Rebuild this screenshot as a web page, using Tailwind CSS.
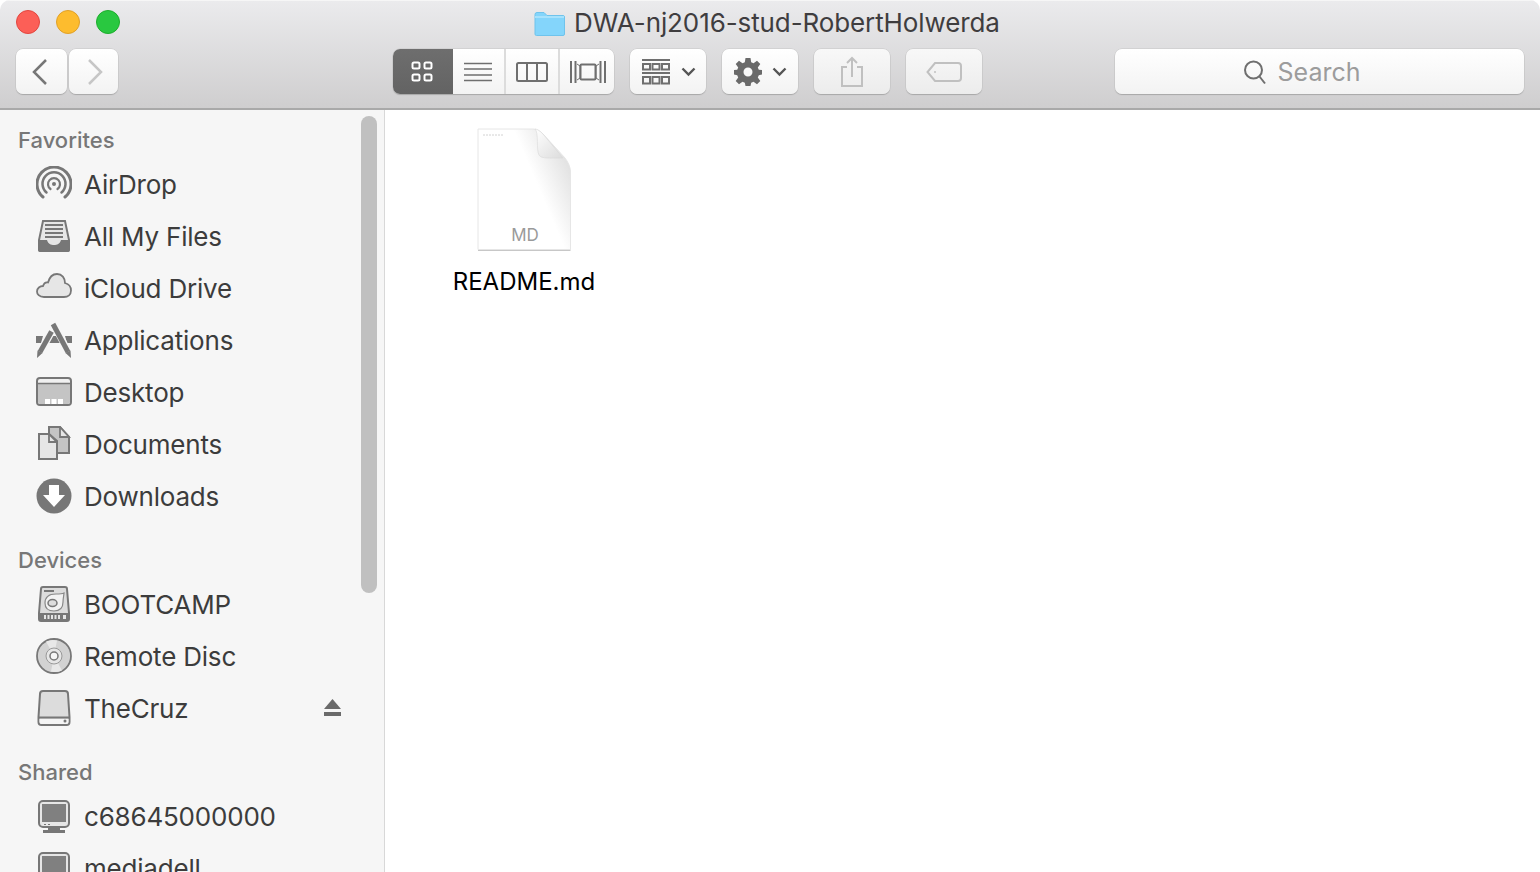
<!DOCTYPE html>
<html lang="en">
<head>
  <meta charset="UTF-8" />
  <title>DWA-nj2016-stud-RobertHolwerda</title>
  <script src="https://cdn.jsdelivr.net/npm/@tailwindcss/browser@4"></script>
</head>
<body class="bg-white h-[872px] overflow-hidden font-['Inter','Liberation_Sans',sans-serif] text-[#3c3c3c]">
<div class="flex flex-col h-[872px] overflow-hidden rounded-t-[10px]">

  <!-- toolbar -->
  <header class="h-[110px] shrink-0 flex flex-col bg-gradient-to-b from-[#ebebed] to-[#cfcecf] border-b-2 border-[#a9a9a9] shadow-[inset_0_1px_0_#f6f6f6]">
    <div class="relative h-[49px] flex items-center justify-center pr-[6px] pb-[3px]">
      <div class="absolute left-[16px] top-[10px] flex gap-[16px]">
        <span class="w-[24px] h-[24px] rounded-full bg-[#fc5f57] border border-[#e2463f]"></span>
        <span class="w-[24px] h-[24px] rounded-full bg-[#fdbc2e] border border-[#e0a028]"></span>
        <span class="w-[24px] h-[24px] rounded-full bg-[#29c840] border border-[#1dad2c]"></span>
      </div>
      <svg class="mr-[9px]" width="31" height="25" viewBox="0 0 31 25">
        <path d="M1 3.500A2 2 0 0 1 3 1.500H10L13 4.500H29A1.500 1.500 0 0 1 30.500 6V23A1.500 1.500 0 0 1 29 24.500H2.500A1.500 1.500 0 0 1 1 23Z" fill="#84d5fb" stroke="#6fc3ec" stroke-width="1"/>
        <path d="M1 6H30" stroke="#a7e2fc" stroke-width="2"/>
      </svg>
      <span class="text-[26px] tracking-[-0.1px] leading-none text-[#3f3d3f]">DWA-nj2016-stud-RobertHolwerda</span>
    </div>

    <div class="flex items-start pl-[16px]">
      <div class="flex gap-[2px]">
        <button class="w-[51px] h-[45px] flex items-center justify-center pr-[4px] rounded-[7px] bg-gradient-to-b from-white to-[#f3f3f3] shadow-[0_1px_1px_#a8a8a8,0_0_0_0.5px_#c6c6c6]">
          <svg width="18" height="28" viewBox="0 0 18 28" fill="none"><path d="M15 2L3 14L15 26" stroke="#777" stroke-width="2.500"/></svg>
        </button>
        <button class="w-[49px] h-[45px] flex items-center justify-center pl-[3px] rounded-[7px] bg-gradient-to-b from-white to-[#f3f3f3] shadow-[0_1px_1px_#a8a8a8,0_0_0_0.5px_#c6c6c6]">
          <svg width="18" height="28" viewBox="0 0 18 28" fill="none"><path d="M3 2L15 14L3 26" stroke="#c6c6c6" stroke-width="2.500"/></svg>
        </button>
      </div>

      <div class="ml-[275px] flex h-[45px] rounded-[7px] overflow-hidden bg-gradient-to-b from-white to-[#f3f3f3] shadow-[0_1px_1px_#a8a8a8,0_0_0_0.5px_#c6c6c6]">
        <div class="w-[60px] flex items-center justify-center pr-[2px] bg-gradient-to-b from-[#6e6e6e] to-[#636363]">
          <svg width="22" height="22" viewBox="0 0 22 22" fill="none" stroke="#fff" stroke-width="2"><rect x="1.500" y="1.500" width="7" height="6" rx="1.500"/><rect x="13.500" y="1.500" width="7" height="6" rx="1.500"/><rect x="1.500" y="13.500" width="7" height="6" rx="1.500"/><rect x="13.500" y="13.500" width="7" height="6" rx="1.500"/></svg>
        </div>
        <div class="w-[53px] flex items-center justify-center pr-[2px] border-r-2 border-[#dcdcdc]">
          <svg width="28" height="20" viewBox="0 0 28 20" stroke="#6f6f6f" stroke-width="1.500"><path d="M0 1.500H28M0 7H28M0 13H28M0 18.500H28"/></svg>
        </div>
        <div class="w-[54px] flex items-center justify-center border-r-2 border-[#dcdcdc]">
          <svg width="32" height="20" viewBox="0 0 32 20" fill="none" stroke="#6f6f6f" stroke-width="2"><rect x="1" y="1" width="30" height="18" rx="1.500"/><path d="M11 1V19M21 1V19"/></svg>
        </div>
        <div class="w-[54px] flex items-center justify-center pl-[2px]">
          <svg width="36" height="22" viewBox="0 0 36 22" fill="none" stroke="#6f6f6f" stroke-width="2"><path d="M1 0V22M5.500 0V22M30.500 0V22M35 0V22"/><rect x="10.500" y="3.500" width="15" height="15" rx="1"/><path d="M7 3L10 5V17L7 19M29 3L26 5V17L29 19" stroke-width="1"/></svg>
        </div>
      </div>

      <button class="ml-[16px] w-[76px] h-[45px] flex items-center justify-center gap-[11px] pl-[1px] rounded-[7px] bg-gradient-to-b from-white to-[#f3f3f3] shadow-[0_1px_1px_#a8a8a8,0_0_0_0.5px_#c6c6c6]">
        <svg width="28" height="26" viewBox="0 0 28 26" fill="none" stroke="#6f6f6f" stroke-width="2"><path d="M0 1H28M0 14H28" /><rect x="1" y="5" width="7" height="5.500"/><rect x="10.500" y="5" width="7" height="5.500"/><rect x="20" y="5" width="7" height="5.500"/><rect x="1" y="18" width="7" height="6.500"/><rect x="10.500" y="18" width="7" height="6.500"/><rect x="20" y="18" width="7" height="6.500"/></svg>
        <svg width="15" height="10" viewBox="0 0 15 10" fill="none"><path d="M1.500 1.500L7.500 7.500L13.500 1.500" stroke="#555" stroke-width="2.400"/></svg>
      </button>

      <button class="ml-[16px] w-[76px] h-[45px] flex items-center justify-center gap-[10px] pl-[1px] rounded-[7px] bg-gradient-to-b from-white to-[#f3f3f3] shadow-[0_1px_1px_#a8a8a8,0_0_0_0.5px_#c6c6c6]">
        <svg width="28" height="28" viewBox="0 0 28 28"><path fill="#6a6a6a" fill-rule="evenodd" d="M11.500 0H16.500L17.200 4.200L19.500 5.200L23 2.700L26.300 6L23.800 9.500L24.800 11.800L28 12V16.500L24.800 17.200L23.800 19.500L26.300 23L23 26.300L19.500 23.800L17.200 24.800L16.500 28H11.500L10.800 24.800L8.500 23.800L5 26.300L1.700 23L4.200 19.500L3.200 17.200L0 16.500V12L3.200 11.800L4.200 9.500L1.700 6L5 2.700L8.500 5.200L10.800 4.200ZM14 9.500A4.500 4.500 0 1 0 14 18.500A4.500 4.500 0 1 0 14 9.500Z"/></svg>
        <svg width="15" height="10" viewBox="0 0 15 10" fill="none"><path d="M1.500 1.500L7.500 7.500L13.500 1.500" stroke="#555" stroke-width="2.400"/></svg>
      </button>

      <button class="ml-[16px] w-[76px] h-[45px] flex items-center justify-center rounded-[7px] bg-gradient-to-b from-[#f8f8f8] to-[#ececec] shadow-[0_1px_1px_#a8a8a8,0_0_0_0.5px_#c6c6c6]">
        <svg width="24" height="32" viewBox="0 0 24 32" fill="none" stroke="#c0c0c0" stroke-width="2"><path d="M7 11H2V30H22V11H17"/><path d="M12 21V2M7 7L12 2L17 7"/></svg>
      </button>

      <button class="ml-[16px] w-[76px] h-[45px] flex items-center justify-center rounded-[7px] bg-gradient-to-b from-[#f8f8f8] to-[#ececec] shadow-[0_1px_1px_#a8a8a8,0_0_0_0.5px_#c6c6c6]">
        <svg width="36" height="22" viewBox="0 0 36 22" fill="none" stroke="#c0c0c0" stroke-width="2"><path d="M9 2H32A3 3 0 0 1 35 5V17A3 3 0 0 1 32 20H9L1.500 11Z"/><circle cx="9" cy="11" r="1" fill="#c0c0c0" stroke="none"/></svg>
      </button>

      <div class="ml-[133px] w-[409px] h-[45px] flex items-center justify-center gap-[11px] pr-[36px] rounded-[7px] bg-gradient-to-b from-white to-[#f3f3f3] shadow-[0_1px_1px_#a8a8a8,0_0_0_0.5px_#c6c6c6]">
        <svg width="24" height="26" viewBox="0 0 24 26" fill="none" stroke="#6f6f6f" stroke-width="2"><circle cx="10.500" cy="11" r="8.500"/><path d="M16.500 17.500L22 24.500"/></svg>
        <span class="text-[25px] leading-none text-[#9c9c9c] pt-[2px]">Search</span>
      </div>
    </div>
  </header>

  <div class="flex flex-1 min-h-0">
    <!-- sidebar -->
    <aside class="relative w-[385px] shrink-0 bg-[#f6f6f6] border-r border-[#d8d8d8] overflow-hidden pl-[18px] pt-[17px]">
      <div class="absolute left-[361px] top-[6px] w-[16px] h-[477px] rounded-full bg-[#c0c0c0]"></div>

      <h3 class="h-[26px] flex items-center text-[22px] font-medium text-[#777]">Favorites</h3>
      <ul class="mt-[5px]">
        <li class="h-[52px] flex items-center text-[26px] tracking-[-0.2px]">
          <svg class="ml-[18px] mr-[12px]" width="36" height="36" viewBox="0 0 36 36" fill="none" stroke="#777"><path d="M7 31A17 17 0 1 1 29 31" stroke-width="3" stroke-linecap="round"/><path d="M10.500 26.500A11.500 11.500 0 1 1 25.500 26.500" stroke-width="2.500" stroke-linecap="round"/><path d="M14.500 23A6 6 0 1 1 21.500 23" stroke-width="2.200" stroke-linecap="round"/><circle cx="18" cy="18" r="2" fill="#777" stroke="none"/></svg>
          <span>AirDrop</span>
        </li>
        <li class="h-[52px] flex items-center text-[26px] tracking-[-0.2px]">
          <svg class="ml-[18px] mr-[12px]" width="36" height="36" viewBox="0 0 36 36"><path d="M7 3H29L33 22V31A2 2 0 0 1 31 33H5A2 2 0 0 1 3 31V22Z" fill="#e6e6e6" stroke="#777" stroke-width="2"/><path d="M9 7H27M9 11H27M9 15H27M9 19H27" stroke="#777" stroke-width="1.800"/><path d="M2 22H11C12 26 15 27 18 27S24 26 25 22H34V32A2 2 0 0 1 32 34H4A2 2 0 0 1 2 32Z" fill="#777"/></svg>
          <span>All My Files</span>
        </li>
        <li class="h-[52px] flex items-center text-[26px] tracking-[-0.2px]">
          <svg class="ml-[18px] mr-[12px]" width="36" height="36" viewBox="0 3 36 36"><path d="M8 30C3 30 1 27 1 24.500C1 21 4 19 7 19C8 16 10 15 12 15.500C13.500 10 17 7 21 7C26 7 29 11 29 16C33 17 35 20 35 23.500C35 27.500 32 30 28 30Z" fill="#e6e6e6" stroke="#777" stroke-width="1.800"/></svg>
          <span>iCloud Drive</span>
        </li>
        <li class="h-[52px] flex items-center text-[26px] tracking-[-0.2px]">
          <svg class="ml-[18px] mr-[12px]" width="36" height="36" viewBox="0 0 36 36">
            <path d="M0 14H7L5 21H0ZM29 14H36V21H31ZM10 14H26L28 21H8Z" fill="#777"/>
            <path d="M17 1L33 31" stroke="#f6f6f6" stroke-width="7"/>
            <path d="M16 9L4 31" stroke="#f6f6f6" stroke-width="7"/>
            <path d="M17 2L32 30" stroke="#777" stroke-width="5"/>
            <path d="M15.500 9.500L4 30" stroke="#777" stroke-width="5"/>
            <path d="M29.500 31L34.500 28.500L35 36ZM1.500 28.500L6.500 31L1 36Z" fill="#777"/>
          </svg>
          <span>Applications</span>
        </li>
        <li class="h-[52px] flex items-center text-[26px] tracking-[-0.2px]">
          <svg class="ml-[18px] mr-[12px]" width="36" height="30" viewBox="0 0 36 30"><rect x="1" y="1" width="34" height="27" rx="3" fill="#f0f0f0" stroke="#777" stroke-width="2"/><path d="M2 7H34V25A2 2 0 0 1 32 27H4A2 2 0 0 1 2 25Z" fill="#c4c4c4"/><path d="M2 6.500H34" stroke="#777" stroke-width="1.500"/><path d="M9 22H14V27H9ZM15.500 22H20.500V27H15.500ZM22 22H27V27H22Z" fill="#fff"/></svg>
          <span>Desktop</span>
        </li>
        <li class="h-[52px] flex items-center text-[26px] tracking-[-0.2px]">
          <svg class="ml-[18px] mr-[12px]" width="36" height="36" viewBox="0 0 36 36"><path d="M13 1H24L33 11V27H21V15L13 8Z" fill="#c4c4c4" stroke="#777" stroke-width="2"/><path d="M24 1V11H33Z" fill="#e6e6e6" stroke="#777" stroke-width="1.800"/><path d="M3 8H13L21 16V33H3Z" fill="#e6e6e6" stroke="#777" stroke-width="2"/><path d="M13 8V16H21" fill="none" stroke="#777" stroke-width="1.800"/></svg>
          <span>Documents</span>
        </li>
        <li class="h-[52px] flex items-center text-[26px] tracking-[-0.2px]">
          <svg class="ml-[18px] mr-[12px]" width="36" height="36" viewBox="0 0 36 36"><circle cx="18" cy="18" r="17.500" fill="#777"/><path d="M13 7H23V17H29L18 29L7 17H13Z" fill="#fff"/></svg>
          <span>Downloads</span>
        </li>
      </ul>

      <h3 class="mt-[25px] h-[26px] flex items-center text-[22px] font-medium text-[#777]">Devices</h3>
      <ul class="mt-[5px]">
        <li class="h-[52px] flex items-center text-[26px] tracking-[-0.2px]">
          <svg class="ml-[18px] mr-[12px]" width="36" height="36" viewBox="0 0 36 36"><path d="M7 1H29A2 2 0 0 1 31 3L33 27V33A2 2 0 0 1 31 35H5A2 2 0 0 1 3 33V27L5 3A2 2 0 0 1 7 1Z" fill="#dcdcdc" stroke="#777" stroke-width="2"/><path d="M8 4H18V6H8Z" fill="#777"/><path d="M28 7C28 7 26 8 20 8C12 8 9 12 9 17C9 22 12 25 18 25C24 25 27 22 27 16C27 12 28 9 28 7Z" fill="#f2f2f2" stroke="#888" stroke-width="1.200"/><ellipse cx="16.500" cy="17" rx="4.500" ry="3.500" fill="#ddd" stroke="#777" stroke-width="1.500"/><path d="M3 27H33V33A2 2 0 0 1 31 35H5A2 2 0 0 1 3 33Z" fill="#777"/><path d="M8 29H10V33H8ZM11.500 29H13.500V33H11.500ZM15 29H17V33H15ZM18.500 29H20.500V33H18.500ZM22 29H24V33H22ZM27 29H30V33H27Z" fill="#e6e6e6"/></svg>
          <span>BOOTCAMP</span>
        </li>
        <li class="h-[52px] flex items-center text-[26px] tracking-[-0.2px]">
          <svg class="ml-[18px] mr-[12px]" width="36" height="36" viewBox="0 0 36 36"><circle cx="18" cy="18" r="17" fill="#d2d2d2" stroke="#777" stroke-width="1.800"/><path d="M18 18L10 3.500A16 16 0 0 1 21 2.500ZM18 18L26 32.500A16 16 0 0 1 15 33.500Z" fill="#e8e8e8"/><circle cx="18" cy="18" r="8" fill="#e6e6e6" stroke="#999" stroke-width="1"/><circle cx="18" cy="18" r="4" fill="#f6f6f6" stroke="#777" stroke-width="1.500"/></svg>
          <span>Remote Disc</span>
        </li>
        <li class="relative h-[52px] flex items-center text-[26px] tracking-[-0.2px]">
          <svg class="ml-[18px] mr-[12px]" width="36" height="36" viewBox="0 0 36 36"><path d="M7 1H29A3 3 0 0 1 32 4L33.500 27V32A3 3 0 0 1 30.500 35H5.500A3 3 0 0 1 2.500 32V27L4 4A3 3 0 0 1 7 1Z" fill="#dcdcdc" stroke="#777" stroke-width="2"/><path d="M2.500 27.500H33.500" stroke="#777" stroke-width="2"/><path d="M3.500 29H32.500V32A2 2 0 0 1 30.500 34H5.500A2 2 0 0 1 3.500 32Z" fill="#f4f4f4"/><circle cx="29" cy="31" r="1.500" fill="#777"/></svg>
          <span>TheCruz</span>
          <svg class="absolute left-[306px] top-[17px]" width="17" height="18" viewBox="0 0 17 18" fill="#6a6a6a"><path d="M8.500 0L17 10H0Z"/><rect y="13" width="17" height="4"/></svg>
        </li>
      </ul>

      <h3 class="mt-[25px] h-[26px] flex items-center text-[22px] font-medium text-[#777]">Shared</h3>
      <ul class="mt-[5px]">
        <li class="h-[52px] flex items-center text-[26px] tracking-[-0.2px]">
          <svg class="ml-[18px] mr-[12px]" width="36" height="36" viewBox="0 0 36 36"><rect x="3" y="3" width="30" height="26" rx="4" fill="#e6e6e6" stroke="#777" stroke-width="2"/><rect x="6" y="6" width="24" height="18" fill="#808080"/><path d="M8 26H10V27H8ZM12 26H14V27H12Z" fill="#777"/><path d="M12 30H24V32H29V35H7V32H12Z" fill="#777"/></svg>
          <span>c68645000000</span>
        </li>
        <li class="h-[52px] flex items-center text-[26px] tracking-[-0.2px]">
          <svg class="ml-[18px] mr-[12px]" width="36" height="36" viewBox="0 0 36 36"><rect x="3" y="3" width="30" height="26" rx="4" fill="#e6e6e6" stroke="#777" stroke-width="2"/><rect x="6" y="6" width="24" height="18" fill="#808080"/><path d="M8 26H10V27H8ZM12 26H14V27H12Z" fill="#777"/><path d="M12 30H24V32H29V35H7V32H12Z" fill="#777"/></svg>
          <span>mediadell</span>
        </li>
      </ul>
    </aside>

    <!-- file area -->
    <main class="flex-1 bg-white pl-[66px] pt-[18px]">
      <figure class="w-[146px] flex flex-col items-center">
        <svg width="98" height="126" viewBox="0 0 98 126">
          <defs>
            <linearGradient id="fold" x1="0" y1="0" x2="1" y2="1"><stop offset="0" stop-color="#ffffff"/><stop offset="1" stop-color="#dcdcdc"/></linearGradient>
            <linearGradient id="page" x1="1" y1="0.050" x2="0.550" y2="0.300"><stop offset="0" stop-color="#d8d8d8"/><stop offset="1" stop-color="#ffffff"/></linearGradient>
          </defs>
          <path d="M3 1H58C62 1 65 3 68 6L90 30C93 34 95.500 39 95.500 44V121.500H3Z" fill="#000" opacity="0.220" transform="translate(0 1.500)"/>
          <path d="M3 1H58C62 1 65 3 68 6L90 30C93 34 95.500 39 95.500 44V121.500H3Z" fill="url(#page)" stroke="#e6e6e6" stroke-width="1"/>
          <path d="M60 1C64 4 61 22 64 27C66 31 76 30 88 30L68 6C65 3 62 1 60 1Z" fill="url(#fold)" stroke="#d8d8d8" stroke-width="0.600"/>
          <path d="M8 7H28" stroke="#d2d2d2" stroke-width="1" stroke-dasharray="2 1"/>
          <text x="50" y="113" text-anchor="middle" font-family="Inter, sans-serif" font-size="17" fill="#9a9a9a">MD</text>
        </svg>
        <figcaption class="mt-[13px] text-[24px] leading-[30px] text-black">README.md</figcaption>
      </figure>
    </main>
  </div>
</div>
</body>
</html>
